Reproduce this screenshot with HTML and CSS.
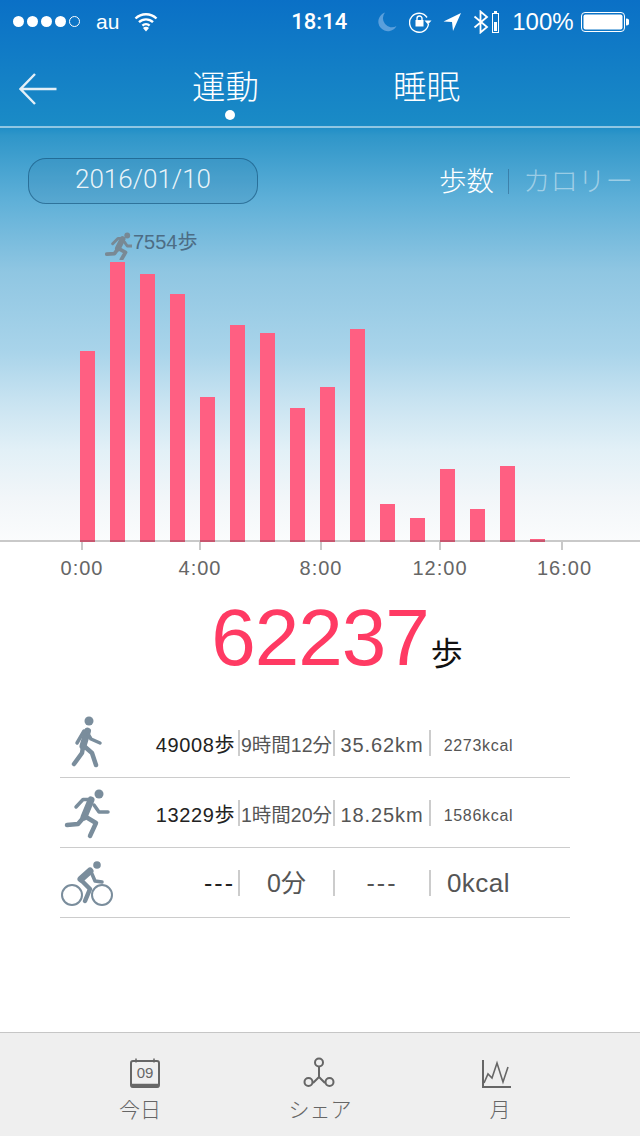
FILE: index.html
```html
<!DOCTYPE html>
<html lang="ja">
<head>
    <meta charset="UTF-8">
    <meta name="viewport" content="width=device-width, initial-scale=1.0">
    <title>運動</title>
    <link rel="stylesheet" href="styles.css">
</head>
<body>
    <div class="top">
        <div class="status">
            <span class="dots"><i></i><i></i><i></i><i></i><i class="off"></i></span>
            <span class="carrier">au</span>
            <svg class="wifi" width="24" height="20" viewBox="0 0 24 20"><path d="M1.5 6.5a15 15 0 0 1 21 0M5 10.2a10 10 0 0 1 14 0M8.4 13.6a5.2 5.2 0 0 1 7.2 0" fill="none" stroke="#fff" stroke-width="2.4"/><path d="M12 19.5l-3-3.6a4.2 4.2 0 0 1 6 0z" fill="#fff"/></svg>
            <span class="time">18:14</span>
            <svg class="moon" width="19" height="20" viewBox="0 0 19 20"><path d="M7 0.5a9.6 9.6 0 1 0 11.5 13.5a9 9 0 0 1 -11.5 -13.5z" fill="#5a9fdc"/></svg>
            <svg class="lock" width="24" height="22" viewBox="0 0 24 22"><path d="M19.5 13a9.5 9.5 0 1 1 -1.5 -6.5" fill="none" stroke="#fff" stroke-width="1.4"/><path d="M15.5 9.5h7l-3.5 4z" fill="#fff"/><rect x="6.5" y="9" width="8" height="6.5" fill="#fff"/><path d="M8 9V7.5a2.5 2.5 0 0 1 5 0V9" fill="none" stroke="#fff" stroke-width="1.4"/></svg>
            <svg class="arrow" width="18" height="20" viewBox="0 0 18 20"><path d="M0.5 9.5L18 1L10 19L9 10z" fill="#fff"/></svg>
            <svg class="bt" width="17" height="24" viewBox="0 0 17 24"><path d="M1.5 6.5L14 17l-6.5 5.5V1.5L14 7L1.5 17.5" fill="none" stroke="#fff" stroke-width="1.8"/></svg>
            <svg class="bat-small" width="7" height="22" viewBox="0 0 7 22"><rect x="2" y="0" width="3" height="2" fill="#fff"/><rect x="0.5" y="2.5" width="6" height="19" fill="none" stroke="#fff"/><rect x="2" y="11" width="3" height="9" fill="#fff"/></svg>
            <span class="percent">100%</span>
            <svg class="battery" width="48" height="20" viewBox="0 0 48 20"><rect x="0.5" y="0.5" width="43" height="19" rx="3.5" fill="none" stroke="#fff"/><rect x="2.5" y="2.5" width="39" height="15" rx="2" fill="#fff"/><path d="M45 6.5a3 3 0 0 1 0 7z" fill="#fff"/></svg>
        </div>

        <div class="nav">
            <svg class="back" width="38" height="34" viewBox="0 0 38 34"><path d="M37.5 17H2M16 2L1.5 17L16 32" fill="none" stroke="#e4eff7" stroke-width="2.4"/></svg>
            <a class="nav-tab active">運動</a>
            <a class="nav-tab">睡眠</a>
        </div>

        <div class="chart-head">
            <div class="date">2016/01/10</div>
            <div class="modes">
                <span class="mode-on">歩数</span>
                <span class="mode-sep"></span>
                <span class="mode-off">カロリー</span>
            </div>
        </div>

        <div class="bars" id="bars">
            <div class="peak">
                <svg class="peak-icon" width="27" height="28" viewBox="0 0 46 48">
                    <g class="figure bold">
                        <circle cx="38" cy="6" r="5"/>
                        <path class="thick" d="M30 12L22 28"/>
                        <path d="M13 20L22 11L31 11M33 17L38 24L46 24"/>
                        <path class="leg" d="M22 29L16 37L3 38M24 29L35 35L28 47"/>
                    </g>
                </svg>
                <span>7554歩</span>
            </div>
        </div>
    </div>

    <div class="axis">
        <span>0:00</span>
        <span>4:00</span>
        <span>8:00</span>
        <span>12:00</span>
        <span class="axis-last">16:00</span>
    </div>

    <div class="total">
        <span class="total-num">62237</span>
        <span class="total-unit">歩</span>
    </div>

    <div class="rows">
        <div class="row">
            <svg class="row-icon" width="60" height="60" viewBox="0 0 60 60">
                <g class="figure" transform="translate(0 -2)">
                    <circle cx="29" cy="10" r="4.5"/>
                    <path class="thick" d="M27.5 20L23 35"/>
                    <path d="M24 20L17 32M28 23L31 28L40 32"/>
                    <path class="leg" d="M23 36L22 42L14 53M24 35L32 42L36 54"/>
                </g>
            </svg>
            <div class="cell first">49008歩</div>
            <div class="cell mid">9時間12分</div>
            <div class="cell dist">35.62km</div>
            <div class="cell kcal">2273kcal</div>
        </div>
        <div class="row">
            <svg class="row-icon" width="60" height="60" viewBox="0 0 60 60">
                <g class="figure" transform="translate(1 3)">
                    <circle cx="38" cy="8" r="4.5"/>
                    <path class="thick" d="M30 14L23 31"/>
                    <path d="M15 21L22 13.5L30 13.5M33 19L38 26L47 26"/>
                    <path class="leg" d="M23 31L17 38L6 39M25 31L35 37L29 50"/>
                </g>
            </svg>
            <div class="cell first">13229歩</div>
            <div class="cell mid">1時間20分</div>
            <div class="cell dist">18.25km</div>
            <div class="cell kcal">1586kcal</div>
        </div>
        <div class="row">
            <svg class="row-icon" width="60" height="60" viewBox="0 0 60 60">
                <g class="figure" transform="translate(0 4)">
                    <circle cx="37" cy="8" r="3.8"/>
                    <path class="thick" d="M30 14L21 22"/>
                    <path d="M32 17L35 24L42 25"/>
                    <path class="leg" d="M22 24L30 32L25 44"/>
                    <circle class="wheel" cx="12" cy="38" r="10"/>
                    <circle class="wheel" cx="42" cy="38" r="10"/>
                </g>
            </svg>
            <div class="cell first big dashes">---</div>
            <div class="cell mid big">0分</div>
            <div class="cell dist big dashes">---</div>
            <div class="cell kcal big">0kcal</div>
        </div>
    </div>

    <div class="tabs">
        <a class="tab">
            <svg class="tab-cal" width="34" height="34" viewBox="0 0 34 34">
                <rect x="3" y="4" width="28" height="26" rx="2" fill="none" stroke="#666" stroke-width="2"/>
                <path d="M3 28.5h28" stroke="#666" stroke-width="3.5"/>
                <path d="M8 1.5v4M26 1.5v4" stroke="#666" stroke-width="1.5"/>
                <text class="cal-day" x="17" y="21" text-anchor="middle">09</text>
            </svg>
            <span>今日</span>
        </a>
        <a class="tab">
            <svg class="tab-share" width="34" height="34" viewBox="0 0 34 34">
                <path d="M17 9v11M17 20L11 26M17 20L23 26" stroke="#666" stroke-width="2" fill="none"/>
                <circle cx="17" cy="5.5" r="4" fill="#efefef" stroke="#666" stroke-width="2"/>
                <circle cx="6.5" cy="25" r="4" fill="#efefef" stroke="#666" stroke-width="2"/>
                <circle cx="27.5" cy="25" r="4" fill="#efefef" stroke="#666" stroke-width="2"/>
            </svg>
            <span>シェア</span>
        </a>
        <a class="tab">
            <svg class="tab-month" width="34" height="34" viewBox="0 0 34 34">
                <path d="M3 3v27h28" stroke="#666" stroke-width="2" fill="none"/>
                <path d="M4 26L8 17L12 21L17 6L23 25L28 10" stroke="#666" stroke-width="1.6" fill="none"/>
            </svg>
            <span>月</span>
        </a>
    </div>

    <script>
        // top edge of each hourly bar, measured down from the chart's y=204
        const tops = [147, 58, 70, 90, 193, 121, 129, 204, 183, 125, 300, 314, 265, 305, 262, 335];
        const bars = document.getElementById('bars');
        tops.forEach(top => {
            const bar = document.createElement('div');
            bar.className = 'bar';
            bar.style.height = (338 - top) + 'px';
            bars.appendChild(bar);
        });
    </script>
</body>
</html>
```

FILE: styles.css
```css
* {
    box-sizing: border-box;
}

body {
    margin: 0;
    width: 640px;
    height: 1136px;
    overflow: hidden;
    background-color: #fff;
    color: #555;
    font-family: "Liberation Sans", "Noto Sans CJK JP", sans-serif;
    display: flex;
    flex-direction: column;
}

.top {
    background: linear-gradient(to bottom, #0a70c6 0%, #1a8bc6 23%, #2f96c9 25%, #5fb0d8 37%, #8fc6e2 50%, #a9d4ea 65%, #c8e3f1 74%, #e2f0f7 83%, #f2f6f9 92%, #fbfcfd 100%);
}

/* status bar */
.status {
    height: 43px;
    display: flex;
    align-items: center;
    padding-left: 13px;
    color: #fff;
}

.dots {
    display: flex;
    gap: 3px;
}

.dots i {
    width: 11px;
    height: 11px;
    border-radius: 50%;
    background-color: #fff;
}

.dots i.off {
    background: none;
    border: 1px solid #fff;
}

.carrier {
    margin-left: 16px;
    font-size: 21px;
}

.wifi {
    margin-left: 15px;
}

.time {
    margin-left: 133px;
    font-family: Roboto, sans-serif;
    font-size: 22px;
    font-weight: 500;
}

.moon {
    margin-left: 31px;
}

.lock {
    margin-left: 12px;
}

.arrow {
    margin-left: 10px;
}

.bt {
    margin-left: 12px;
}

.bat-small {
    margin-left: 2px;
}

.percent {
    margin-left: 13px;
    font-size: 24px;
}

.battery {
    margin-left: 7px;
}

/* nav */
.nav {
    height: 85px;
    display: flex;
    align-items: center;
    padding-left: 19px;
    border-bottom: 2px solid rgba(255, 255, 255, 0.5);
}

.back {
    margin-top: 8px;
}

.nav-tab {
    position: relative;
    margin-left: 135px;
    font-family: "Noto Sans CJK JP", sans-serif;
    font-size: 33.5px;
    font-weight: 300;
    line-height: 40px;
    color: #fff;
}

.nav-tab + .nav-tab {
    margin-left: 134px;
}

.nav-tab.active::after {
    content: "";
    position: absolute;
    left: 33px;
    top: 45px;
    width: 10px;
    height: 10px;
    border-radius: 50%;
    background-color: #fff;
}

/* chart */
.chart-head {
    display: flex;
    justify-content: space-between;
    align-items: center;
    padding: 30px 0 0 28px;
}

.date {
    width: 230px;
    height: 46px;
    border: 1px solid rgba(20, 80, 120, 0.6);
    border-radius: 18px;
    background-color: rgba(20, 90, 140, 0.1);
    text-align: center;
    font-family: Roboto, sans-serif;
    font-size: 26px;
    font-weight: 300;
    line-height: 41px;
    color: rgba(255, 255, 255, 0.9);
}

.modes {
    display: flex;
    align-items: center;
    width: 201px;
    font-family: "Noto Sans CJK JP", sans-serif;
    font-size: 27.5px;
    font-weight: 300;
    white-space: nowrap;
    margin-top: -4px;
}

.mode-on {
    color: #fff;
}

.mode-sep {
    width: 1px;
    height: 25px;
    margin: 4px 14px 0 14px;
    background-color: rgba(40, 90, 130, 0.5);
}

.mode-off {
    color: rgba(255, 255, 255, 0.45);
}

.bars {
    position: relative;
    height: 338px;
    display: flex;
    align-items: flex-end;
    gap: 15px;
    padding-left: 80px;
    border-bottom: 2px solid #c9c9c9;
}

.bar {
    width: 15px;
    margin-bottom: -2px;
    background-color: #ff5f82;
    border-bottom: 2px solid #c9566f;
}

.peak {
    position: absolute;
    left: 105px;
    top: 28px;
    display: flex;
    align-items: flex-start;
    font-size: 20px;
    line-height: 20px;
    color: #4d6d85;
}

.peak-icon {
    opacity: 0.85;
}

.peak span {
    margin-left: 1px;
}

.axis {
    display: grid;
    grid-template-columns: 120px 116px 126px 112px 132px;
    margin-left: 22px;
    font-size: 20px;
    letter-spacing: 1px;
    text-align: center;
    color: #666;
}

.axis span::before {
    content: "";
    display: block;
    width: 2px;
    height: 8px;
    margin: 0 auto 7px;
    background-color: #c9c9c9;
}

.axis-last {
    padding-left: 5px;
}

.axis-last::before {
    position: relative;
    left: -3px;
}

/* total */
.total {
    height: 128px;
    padding-left: 34px;
    display: flex;
    justify-content: center;
    align-items: baseline;
}

.total-num {
    font-size: 80px;
    letter-spacing: -1px;
    line-height: 116px;
    color: #ff3a63;
}

.total-unit {
    margin-left: 2px;
    font-family: "Noto Sans CJK JP", sans-serif;
    font-size: 32px;
    color: #111;
}

/* rows */
.rows {
    margin: 0 70px 0 60px;
}

.row {
    height: 70px;
    display: grid;
    grid-template-columns: 60px 120px 95px 96px 95px;
    align-items: center;
    border-bottom: 1px solid #ccc;
}

.cell {
    height: 26px;
    line-height: 30px;
    white-space: nowrap;
    text-align: center;
    border-right: 2px solid #ccc;
}

.first {
    padding-right: 3px;
    text-align: right;
    font-size: 20px;
    letter-spacing: 0.6px;
    color: #222;
}

.mid {
    font-size: 19.5px;
}

.dist {
    font-size: 20px;
    letter-spacing: 0.9px;
}

.kcal {
    border-right: none;
    font-size: 16px;
    letter-spacing: 0.7px;
    padding-top: 1px;
}

.cell.big {
    font-size: 25px;
    line-height: 26px;
    letter-spacing: 0;
    padding-top: 0;
}

.cell.kcal.big {
    font-size: 26px;
    letter-spacing: 0.5px;
}

.cell.dashes {
    letter-spacing: 2px;
}

.figure {
    fill: #7a8d9c;
    stroke: #7a8d9c;
}

.figure circle {
    stroke: none;
}

.figure path {
    fill: none;
    stroke-width: 3.5;
    stroke-linecap: round;
    stroke-linejoin: round;
}

.figure path.thick {
    stroke-width: 7;
}

.figure path.leg {
    stroke-width: 4.5;
}

.figure circle.wheel {
    fill: none;
    stroke: #7a8d9c;
    stroke-width: 2;
}

.figure.bold {
    fill: #788088;
    stroke: #788088;
}

.figure.bold path {
    stroke-width: 5;
}

.figure.bold path.thick {
    stroke-width: 10;
}

.figure.bold path.leg {
    stroke-width: 6.5;
}

/* bottom tabs */
.tabs {
    margin-top: auto;
    height: 104px;
    display: grid;
    grid-template-columns: repeat(3, 180px);
    justify-content: center;
    padding-top: 24px;
    background-color: #efefef;
    border-top: 1px solid #c6c6c6;
}

.tab {
    display: flex;
    flex-direction: column;
    align-items: center;
    font-family: "Noto Sans CJK JP", sans-serif;
    font-size: 21px;
    font-weight: 300;
    line-height: 34px;
    color: #666;
}

.tab-cal {
    margin-left: 10px;
}

.tab-share {
    margin-left: -2px;
}

.tab-month {
    margin-left: -6px;
}

.cal-day {
    font-family: "Liberation Sans", sans-serif;
    font-size: 15px;
    fill: #666;
}
```
